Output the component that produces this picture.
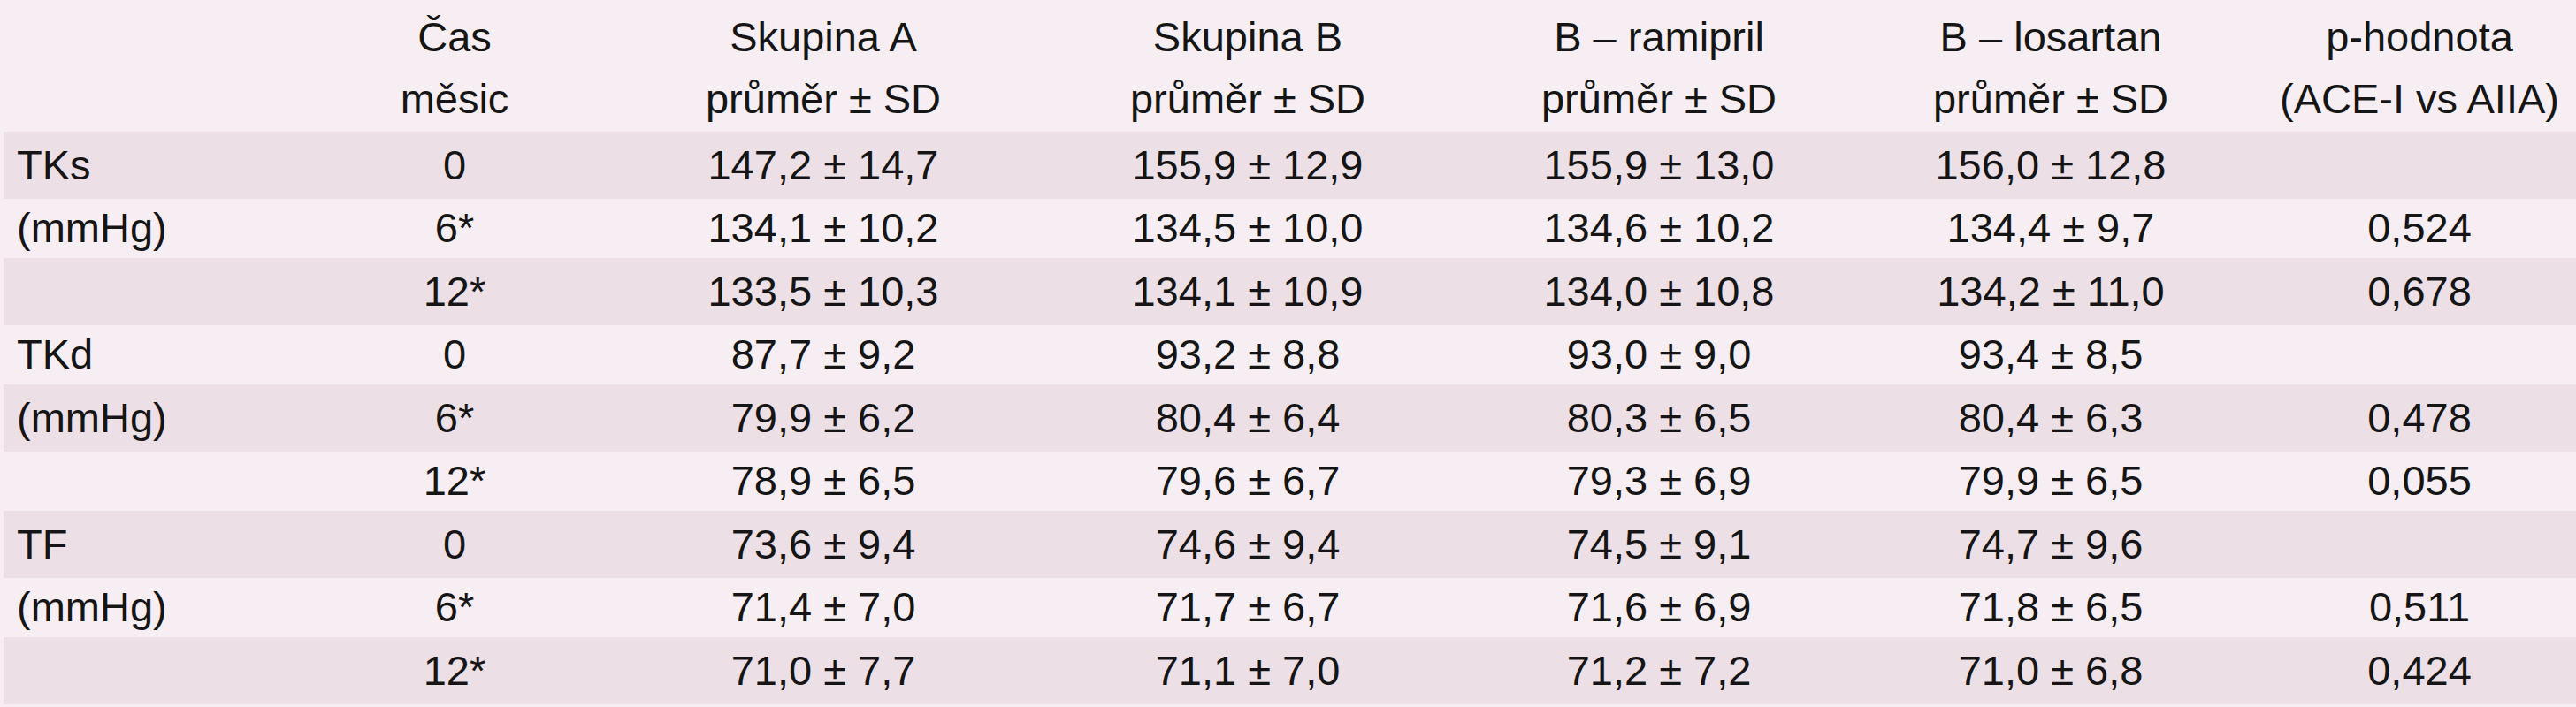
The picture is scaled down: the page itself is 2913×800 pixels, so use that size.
const cols = 'grid grid-cols-[311px_398px_436px_524px_406px_480px_354px]'

const header = [
  ['', ''],
  ['Čas', 'měsic'],
  ['Skupina A', 'průměr ± SD'],
  ['Skupina B', 'průměr ± SD'],
  ['B – ramipril', 'průměr ± SD'],
  ['B – losartan', 'průměr ± SD'],
  ['p-hodnota', '(ACE-I vs AIIA)'],
]

const rows = [
  ['TKs', '0', '147,2 ± 14,7', '155,9 ± 12,9', '155,9 ± 13,0', '156,0 ± 12,8', ''],
  ['(mmHg)', '6*', '134,1 ± 10,2', '134,5 ± 10,0', '134,6 ± 10,2', '134,4 ± 9,7', '0,524'],
  ['', '12*', '133,5 ± 10,3', '134,1 ± 10,9', '134,0 ± 10,8', '134,2 ± 11,0', '0,678'],
  ['TKd', '0', '87,7 ± 9,2', '93,2 ± 8,8', '93,0 ± 9,0', '93,4 ± 8,5', ''],
  ['(mmHg)', '6*', '79,9 ± 6,2', '80,4 ± 6,4', '80,3 ± 6,5', '80,4 ± 6,3', '0,478'],
  ['', '12*', '78,9 ± 6,5', '79,6 ± 6,7', '79,3 ± 6,9', '79,9 ± 6,5', '0,055'],
  ['TF', '0', '73,6 ± 9,4', '74,6 ± 9,4', '74,5 ± 9,1', '74,7 ± 9,6', ''],
  ['(mmHg)', '6*', '71,4 ± 7,0', '71,7 ± 6,7', '71,6 ± 6,9', '71,8 ± 6,5', '0,511'],
  ['', '12*', '71,0 ± 7,7', '71,1 ± 7,0', '71,2 ± 7,2', '71,0 ± 6,8', '0,424'],
]

export default function App() {
  return (
    <div className="w-[2913px] h-[800px] overflow-hidden bg-[#f6eef2] pl-[4px] text-[47px] text-[#151515] font-['Liberation_Sans',Arial,sans-serif]">
      {/* header */}
      <div className={`${cols} h-[149px] pt-[7px] leading-[70px]`}>
        {header.map(([a, b], i) => (
          <div key={i} className="text-center whitespace-nowrap">
            <div>{a || '\u00a0'}</div>
            <div>{b || '\u00a0'}</div>
          </div>
        ))}
      </div>

      {/* body */}
      {rows.map((row, r) => {
        const shaded = r % 2 === 0
        return (
          <div
            key={r}
            className={
              shaded
                ? `${cols} h-[76px] pt-[2px] leading-[72px] bg-[#ecdfe5]`
                : `${cols} h-[67px] leading-[66px]`
            }
          >
            {row.map((cell, c) => (
              <div
                key={c}
                className={c === 0 ? 'pl-[15px] whitespace-nowrap' : 'text-center whitespace-nowrap'}
              >
                {cell}
              </div>
            ))}
          </div>
        )
      })}
    </div>
  )
}
